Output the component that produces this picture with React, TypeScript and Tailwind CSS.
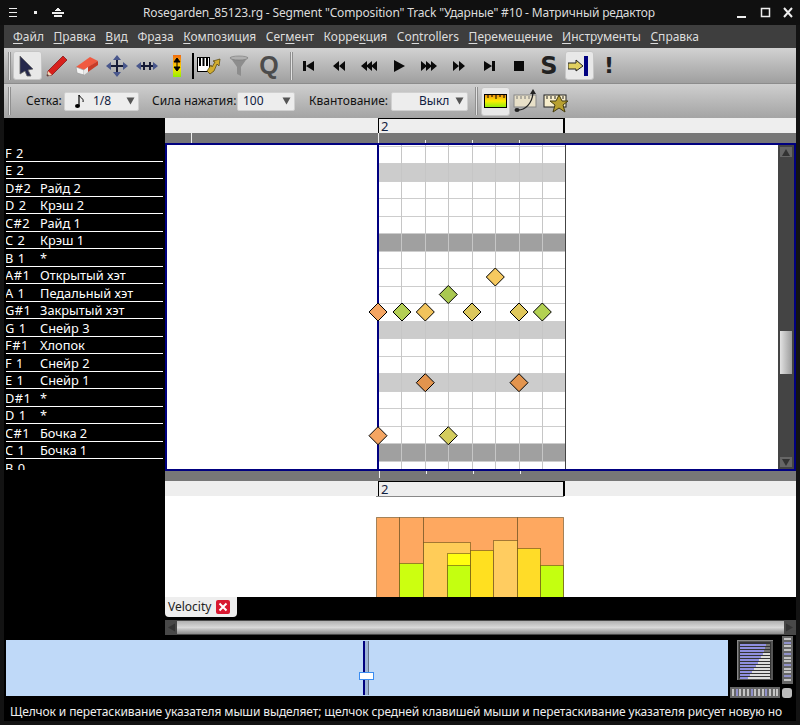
import type { ReactNode } from "react";

const FONT = "font-['Noto_Sans','Open_Sans',sans-serif]";

const menus: [string, string, string][] = [
  ["", "Ф", "айл"],
  ["", "П", "равка"],
  ["", "В", "ид"],
  ["Фр", "а", "за"],
  ["", "К", "омпозиция"],
  ["Сег", "м", "ент"],
  ["Корре", "к", "ция"],
  ["Co", "n", "trollers"],
  ["", "П", "еремещение"],
  ["", "И", "нструменты"],
  ["", "С", "правка"],
];

const keys: [string, string][] = [
  ["F 2", ""],
  ["E 2", ""],
  ["D#2", "Райд 2"],
  ["D 2", "Крэш 2"],
  ["C#2", "Райд 1"],
  ["C 2", "Крэш 1"],
  ["B 1", "*"],
  ["A#1", "Открытый хэт"],
  ["A 1", "Педальный хэт"],
  ["G#1", "Закрытый хэт"],
  ["G 1", "Снейр 3"],
  ["F#1", "Хлопок"],
  ["F 1", "Снейр 2"],
  ["E 1", "Снейр 1"],
  ["D#1", "*"],
  ["D 1", "*"],
  ["C#1", "Бочка 2"],
  ["C 1", "Бочка 1"],
  ["B 0", ""],
];

const columns = [401, 425, 448, 472, 495, 519, 542];
const rowEdges = Array.from({ length: 19 }, (_, k) => Math.round(145.5 + 17.5 * k));

const notes: [number, number, string][] = [
  [378, 312, "#f4a562"],
  [402, 312, "#b4cf55"],
  [425.3, 312, "#f2c45c"],
  [448.3, 294.5, "#a9c850"],
  [472, 312, "#dcc75c"],
  [495.3, 277, "#f6c95f"],
  [519, 312, "#dfc75c"],
  [542.3, 312, "#b3d152"],
  [425.3, 382.7, "#e2944e"],
  [519, 382.7, "#e2944e"],
  [378, 435.7, "#f4a562"],
  [448.3, 435.7, "#d3cc5e"],
];

const velocityBars: [number, number, number, string][] = [
  [376, 517, 23, "#fea860"],
  [399, 517, 24, "#fea860"],
  [423, 517, 94, "#fea860"],
  [517, 517, 46, "#fea860"],
  [399, 563, 24, "#ccff10"],
  [423, 542, 47, "#ffcc58"],
  [447, 553, 23, "#ffff10"],
  [447, 565, 23, "#c4ff10"],
  [470, 550, 23, "#ffe020"],
  [493, 540, 24, "#ffcc60"],
  [517, 548, 23, "#ffdc28"],
  [540, 565, 23, "#c4ff10"],
];

function Handle() {
  return <div className="h-[28px] w-[3px] shrink-0 border-x border-x-[#8f8f8f] bg-[#e2e2e2]" />;
}

function Tool({ active, className, children }: { active?: boolean; className: string; children: ReactNode }) {
  return (
    <div className={`flex h-[29px] shrink-0 items-center justify-center ${className}`}>
      <div
        className={`flex h-[29px] w-[29px] items-center justify-center rounded-[3px] border ${
          active ? "border-[#c6c6c6] bg-[#e8e8e8]" : "border-transparent"
        }`}
      >
        {children}
      </div>
    </div>
  );
}

function Combo({ className, children }: { className: string; children: ReactNode }) {
  return (
    <div className={`flex h-[19px] items-center rounded-[2px] border border-[#d0d0d0] bg-[#ededed] ${className}`}>
      {children}
      <svg width="9" height="8" viewBox="0 0 9 8" className="ml-auto mr-[3px]">
        <polygon points="0.5,0.5 8.5,0.5 4.5,7.5" fill="#555" />
      </svg>
    </div>
  );
}

function Transport({ d }: { d: string }) {
  return (
    <svg width="16" height="14" viewBox="0 0 16 14">
      <path d={d} fill="#0a0a0a" />
    </svg>
  );
}

function Ruler({ bottom }: { bottom?: boolean }) {
  return (
    <div className="relative h-[15px] bg-[#eeeeee]">
      <div className="absolute left-[213px] top-0 h-[15px] w-[187px] border-t border-l border-r-2 border-black" />
      {bottom && <div className="absolute left-[211px] top-[15px] h-px w-[188px] bg-[#888]" />}
      <span className="absolute left-[216px] top-0 text-[13px] leading-[17px] text-[#102040]">2</span>
    </div>
  );
}

function Ticks({ flip }: { flip?: boolean }) {
  const align = flip ? "items-start" : "items-end";
  return (
    <div className={`flex h-[10px] bg-[#777777] ${align}`}>
      {!flip && <div className="ml-[26px] mr-[186px] h-[10px] w-px bg-[#eee]" />}
      {flip && <div className="ml-[213px] w-px" />}
      <div className={`${flip ? "h-[7px]" : "h-[10px]"} w-px bg-[#eee]`} />
      <div className="ml-[46px] h-[3px] w-px bg-[#eee]" />
      <div className="ml-[46px] h-[3px] w-px bg-[#eee]" />
      <div className="ml-[46px] h-[3px] w-px bg-[#eee]" />
    </div>
  );
}

function Matrix() {
  return (
    <svg width="611" height="324" viewBox="167 145 611 324" className="block">
      <rect x="167" y="145" width="611" height="324" fill="#fff" />
      <g shapeRendering="crispEdges">
        {[1, 10, 13].map((k) => (
          <rect key={k} x="379" y={rowEdges[k]} width="186" height={rowEdges[k + 1] - rowEdges[k]} fill="#cccccc" />
        ))}
        {[5, 17].map((k) => (
          <rect key={k} x="379" y={rowEdges[k]} width="186" height={rowEdges[k + 1] - rowEdges[k]} fill="#a0a0a0" />
        ))}
        {rowEdges.map((y) => (
          <line key={y} x1="379" x2="565" y1={y + 0.5} y2={y + 0.5} stroke="#cdcdcd" />
        ))}
        {columns.map((x) => (
          <line key={x} x1={x + 0.5} x2={x + 0.5} y1="145" y2="469" stroke="#c6c6c6" />
        ))}
        <line x1="565.5" x2="565.5" y1="145" y2="469" stroke="#444" />
        <rect x="377" y="145" width="2" height="324" fill="#000080" />
      </g>
      {notes.map(([x, y, fill]) => (
        <polygon
          key={`${x}-${y}`}
          points={`${x},${y - 9} ${x + 9},${y} ${x},${y + 9} ${x - 9},${y}`}
          fill={fill}
          stroke="#000"
          strokeWidth="1"
        />
      ))}
    </svg>
  );
}

function Velocity() {
  return (
    <svg width="631" height="101" viewBox="165 496 631 101" className="block">
      <rect x="165" y="496" width="631" height="101" fill="#fff" />
      {velocityBars.map(([x, y, w, fill]) => (
        <rect
          key={`${x}-${y}`}
          x={x + 0.5}
          y={y + 0.5}
          width={w}
          height={110}
          fill={fill}
          stroke="#5a4010"
          strokeOpacity="0.55"
        />
      ))}
    </svg>
  );
}

function VScroll() {
  return (
    <div className="flex w-[16px] shrink-0 flex-col items-center bg-[#444444] pb-[2px] pt-[2px]">
      <div className="flex h-[10px] w-[12px] items-center justify-center bg-[#666]">
        <svg width="8" height="7" viewBox="0 0 8 7"><polygon points="4,0 8,7 0,7" fill="#333" /></svg>
      </div>
      <div className="mt-[174px] h-[43px] w-[12px] bg-gradient-to-r from-[#e2e2e2] to-[#9c9c9c]" />
      <div className="mt-[83px] flex h-[10px] w-[12px] items-center justify-center bg-[#666]">
        <svg width="8" height="7" viewBox="0 0 8 7"><polygon points="0,0 8,0 4,7" fill="#333" /></svg>
      </div>
    </div>
  );
}

function Dial() {
  const rows = [26, 25, 24, 23, 21, 19, 18, 16, 14, 12, 10, 8];
  return (
    <svg width="36" height="40" viewBox="0 0 36 40" className="block" shapeRendering="crispEdges">
      <rect width="36" height="40" fill="#555" stroke="#888" />
      <rect x="2" y="2" width="32" height="36" fill="#333" />
      {rows.map((w, i) => (
        <g key={i}>
          <rect x="3" y={4 + i * 3} width={w} height="2" fill="#8f8fe0" />
          <rect x={3 + w} y={4 + i * 3} width={30 - w} height="2" fill={i < 3 ? "#777" : "#ddd"} />
        </g>
      ))}
    </svg>
  );
}

function Wheel({ vertical }: { vertical?: boolean }) {
  const n = vertical ? 12 : 13;
  return (
    <svg
      width={vertical ? 11 : 50}
      height={vertical ? 48 : 11}
      viewBox={vertical ? "0 0 11 48" : "0 0 50 11"}
      className="block"
      shapeRendering="crispEdges"
    >
      <rect width="100%" height="100%" fill="#666" />
      {Array.from({ length: n }, (_, i) =>
        vertical ? (
          <rect key={i} x="2" y={2 + i * 3.7} width="7" height="2" fill={i % 3 === 1 ? "#8f90c8" : "#c4c4c4"} />
        ) : (
          <rect key={i} x={2 + i * 3.7} y="2" width="2" height="7" fill={i % 4 === 1 ? "#8f90c8" : "#c4c4c4"} />
        ),
      )}
    </svg>
  );
}

export default function App() {
  return (
    <div className={`flex h-[725px] w-[800px] flex-col overflow-hidden bg-[#131313] ${FONT}`}>
      {/* title bar */}
      <div className="flex h-[25px] shrink-0 items-center bg-[#101010] text-[#dcdcdc]">
        <svg width="70" height="14" viewBox="0 0 70 14" className="ml-[6px] shrink-0" shapeRendering="crispEdges">
          <rect x="3" y="2" width="8" height="1" fill="#eee" />
          <rect x="3" y="6" width="8" height="1" fill="#eee" />
          <rect x="3" y="10" width="8" height="1" fill="#eee" />
          <rect x="28" y="5" width="3" height="3" fill="#eee" />
          <polygon points="49,5 52,1 55,5" fill="#eee" />
          <rect x="46" y="6" width="12" height="2" fill="#eee" />
          <rect x="48" y="9" width="8" height="2" fill="#eee" />
        </svg>
        <div className="ml-[67px] w-[594px] whitespace-nowrap text-[12px] leading-[25px] tracking-[-0.15px]">
          Rosegarden_85123.rg - Segment "Composition" Track "Ударные" #10 - Матричный редактор
        </div>
        <svg width="60" height="14" viewBox="0 0 60 14" className="shrink-0">
          <rect x="0" y="10" width="9" height="2" fill="#eee" />
          <rect x="24.5" y="2.5" width="8" height="8" fill="none" stroke="#eee" strokeWidth="1.5" />
          <path d="M47 2 L55 11 M55 2 L47 11" stroke="#eee" strokeWidth="2" />
        </svg>
      </div>

      <div className="flex min-h-0 flex-1 flex-col px-[4px] pb-[4px]">
        {/* menu */}
        <div className="flex h-[23px] shrink-0 items-center gap-[9.5px] bg-[#3e3e3e] pl-[9px] text-[12px] text-[#dddddd]">
          {menus.map(([a, b, c]) => (
            <span key={a + b + c} className="whitespace-nowrap">
              {a}
              <span className="underline underline-offset-2">{b}</span>
              {c}
            </span>
          ))}
        </div>

        {/* main toolbar */}
        <div className="flex h-[35px] shrink-0 items-center bg-gradient-to-b from-[#d2d2d2] to-[#9f9f9f] pl-[4px]">
          <Handle />
          <div className="w-[1px]" />
          <Tool active className="w-[30px]">
            <svg width="18" height="22" viewBox="0 0 18 22">
              <polygon points="2,1 15,14 10,15 13,21 9,21 7,16 2,19" fill="#25284c" stroke="#666" strokeWidth="0.8" />
            </svg>
          </Tool>
          <Tool className="w-[30px]">
            <svg width="22" height="22" viewBox="0 0 22 22">
              <polygon points="1,21 2,16 17,1 21,5 6,20" fill="#d8201c" stroke="#7a1010" strokeWidth="0.7" />
              <polygon points="1,21 2,16 6,20" fill="#eed8b8" />
              <polygon points="1,21 1.5,19 3,20.5" fill="#222" />
            </svg>
          </Tool>
          <Tool className="w-[30px]">
            <svg width="24" height="22" viewBox="0 0 24 22">
              <polygon points="1,12 15,2 23,6 9,15" fill="#f05a40" />
              <polygon points="1,12 9,15 9,20 2,18" fill="#f4f4f4" stroke="#999" strokeWidth="0.7" />
              <polygon points="9,15 13,12 13,17 9,20" fill="#e8e8e8" />
              <polygon points="13,12 23,6 23,10 13,17" fill="#c83c28" />
            </svg>
          </Tool>
          <Tool className="w-[30px]">
            <svg width="22" height="22" viewBox="0 0 22 22">
              <path d="M11 3 V19 M3 11 H19" stroke="#151a36" strokeWidth="2" />
              <path d="M11 0 L15 5 H7 Z M11 22 L7 17 H15 Z M0 11 L5 7 V15 Z M22 11 L17 15 V7 Z" fill="#49578c" />
            </svg>
          </Tool>
          <Tool className="w-[30px]">
            <svg width="22" height="12" viewBox="0 0 22 12">
              <path d="M3 6 H19 M8 2 V10 M14 2 V10" stroke="#151a36" strokeWidth="2" />
              <path d="M0 6 L5 2 V10 Z M22 6 L17 10 V2 Z" fill="#49578c" />
            </svg>
          </Tool>
          <Tool className="w-[30px]">
            <svg width="8" height="22" viewBox="0 0 8 22">
              <defs>
                <linearGradient id="vel" x1="0" x2="0" y1="0" y2="1">
                  <stop offset="0" stopColor="#f06a10" />
                  <stop offset="0.6" stopColor="#ffe000" />
                  <stop offset="1" stopColor="#90f000" />
                </linearGradient>
              </defs>
              <rect width="8" height="22" fill="url(#vel)" />
              <path d="M4 4 V15 M4 3 L7 7 H1 Z M4 16 L1 12 H7 Z" fill="#000" stroke="#000" />
            </svg>
          </Tool>
          <div className="h-[26px] w-[2px] shrink-0 bg-black" />
          <Tool className="w-[30px]">
            <svg width="24" height="20" viewBox="0 0 24 20">
              <rect x="0.5" y="1.5" width="12" height="14" fill="#fff" stroke="#000" />
              <path d="M3 2 V10 M6.5 2 V10 M10 2 V10" stroke="#000" strokeWidth="2" />
              <path d="M0 11 V15" stroke="#000" />
              <polygon points="10,15 14,9 15,11 18,6 16,5 23,3 22,10 20,8 17,15 13,18" fill="#d2ad2e" stroke="#50400a" strokeWidth="0.7" />
            </svg>
          </Tool>
          <Tool className="w-[30px]">
            <svg width="20" height="22" viewBox="0 0 20 22">
              <polygon points="1,2 19,2 12,12 12,21 8,19 8,12" fill="#8d8d8d" />
              <ellipse cx="10" cy="3" rx="9" ry="2" fill="#b0b0b0" stroke="#777" strokeWidth="0.6" />
            </svg>
          </Tool>
          <Tool className="w-[30px]">
            <span className="font-['Liberation_Sans',sans-serif] text-[25px] font-bold leading-none text-[#4c4c4c]">Q</span>
          </Tool>
          <div className="w-[6px]" />
          <Handle />
          <div className="w-[1px]" />
          <Tool className="w-[30px]"><Transport d="M2 2 H5 V12 H2 Z M5 7 L13 2 V12 Z" /></Tool>
          <Tool className="w-[30px]"><Transport d="M8 7 L14 2 V12 Z M2 7 L8 2 V12 Z" /></Tool>
          <Tool className="w-[30px]"><Transport d="M0 7 L6 2 V12 Z M5 7 L11 2 V12 Z M10 7 L16 2 V12 Z" /></Tool>
          <Tool className="w-[30px]"><Transport d="M3 1 L14 7 L3 13 Z" /></Tool>
          <Tool className="w-[30px]"><Transport d="M16 7 L10 12 V2 Z M11 7 L5 12 V2 Z M6 7 L0 12 V2 Z" /></Tool>
          <Tool className="w-[30px]"><Transport d="M14 7 L8 12 V2 Z M8 7 L2 12 V2 Z" /></Tool>
          <Tool className="w-[30px]"><Transport d="M3 2 L11 7 L3 12 Z M11 2 H14 V12 H11 Z" /></Tool>
          <Tool className="w-[30px]"><Transport d="M3 2 H13 V12 H3 Z" /></Tool>
          <Tool className="w-[30px]">
            <span className="font-['DejaVu_Sans',sans-serif] text-[24px] font-bold leading-none text-[#222]">S</span>
          </Tool>
          <Tool active className="w-[30px]">
            <svg width="22" height="20" viewBox="0 0 22 20">
              <polygon points="0,7 8,7 8,4 15,10 8,15 8,13 0,13" fill="#e0cf60" stroke="#222" />
              <rect x="16" y="0" width="4" height="20" fill="#000080" />
            </svg>
          </Tool>
          <Tool className="w-[30px]">
            <span className="font-['DejaVu_Sans',sans-serif] text-[22px] font-bold leading-none text-[#222]">!</span>
          </Tool>
        </div>

        {/* second toolbar */}
        <div className="flex h-[35px] shrink-0 items-center border-t border-t-[#8c8c8c] bg-gradient-to-b from-[#cfcfcf] to-[#a4a4a4] pl-[4px] text-[12px] text-[#111]">
          <Handle />
          <span className="ml-[15px] w-[38px] whitespace-nowrap">Сетка:</span>
          <Combo className="w-[75px]">
            <svg width="10" height="15" viewBox="0 0 10 15" className="ml-[10px]">
              <path d="M4 1 V12" stroke="#000" strokeWidth="1.2" />
              <path d="M4 1 C5 4 9 4 8 8" stroke="#000" fill="none" />
              <ellipse cx="2.5" cy="12" rx="2.5" ry="2" fill="#000" />
            </svg>
            <span className="ml-[8px] text-[#102040]">1/8</span>
          </Combo>
          <span className="ml-[13px] w-[85px] whitespace-nowrap">Сила нажатия:</span>
          <Combo className="w-[58px]">
            <span className="ml-[5px] text-[#102040]">100</span>
          </Combo>
          <span className="ml-[14px] w-[82px] whitespace-nowrap">Квантование:</span>
          <Combo className="w-[77px]">
            <span className="ml-[27px] text-[#102040]">Выкл</span>
          </Combo>
          <div className="ml-[7px]"><Handle /></div>
          <Tool active className="ml-[2px] w-[30px]">
            <svg width="23" height="14" viewBox="0 0 23 14">
              <defs>
                <linearGradient id="bar" x1="0" x2="0" y1="0" y2="1">
                  <stop offset="0" stopColor="#f08a10" />
                  <stop offset="0.5" stopColor="#ffee00" />
                  <stop offset="1" stopColor="#88ee10" />
                </linearGradient>
              </defs>
              <rect x="0.5" y="0.5" width="22" height="13" fill="url(#bar)" stroke="#000" />
              <path d="M4 1 V4 M8 1 V3 M12 1 V5 M16 1 V3 M20 1 V4" stroke="#000" />
            </svg>
          </Tool>
          <svg width="24" height="24" viewBox="0 0 24 24" className="ml-[3px] shrink-0">
            <rect x="1" y="6" width="22" height="12" fill="#e8e0c8" stroke="#888" />
            <path d="M4 7 V10 M8 7 V10 M12 7 V10 M16 7 V10" stroke="#777" />
            <path d="M5 21 C12 21 19 15 20 4" stroke="#222" fill="none" strokeWidth="1.3" />
            <polygon points="20,0 23,5 17,5" fill="#222" />
            <ellipse cx="4" cy="21" rx="2.5" ry="2" fill="#222" />
          </svg>
          <svg width="26" height="24" viewBox="0 0 26 24" className="ml-[6px] shrink-0">
            <rect x="1" y="6" width="22" height="12" fill="#f8eecc" stroke="#222" />
            <path d="M4 7 V10 M8 7 V10 M12 7 V10 M16 7 V10 M20 7 V10" stroke="#222" />
            <polygon points="16,6 19,12 25,12 20,16 22,23 16,19 10,23 12,16 7,12 13,12" fill="#b8a030" stroke="#443c10" />
          </svg>
        </div>

        {/* editor */}
        <div className="flex shrink-0 bg-black">
          <div className="w-[161px] shrink-0 pl-[2px] pr-[2px]">
            <div className="h-[352px] overflow-hidden pt-[26px]">
              {keys.map(([note, name]) => (
                <div key={note} className="flex h-[17.5px] items-center border-b border-b-white pt-[2px] text-[12.8px] leading-none text-white">
                  <span className="ml-[-1px] w-[35px] shrink-0 whitespace-nowrap tracking-[0.5px]">{note}</span>
                  <span className="whitespace-nowrap">{name}</span>
                </div>
              ))}
            </div>
          </div>
          <div className="w-[631px] shrink-0">
            <Ruler />
            <Ticks />
            <div className="flex border-2 border-[#000080]">
              <Matrix />
              <VScroll />
            </div>
            <Ticks flip />
            <Ruler bottom />
            <Velocity />
          </div>
        </div>

        {/* controller tabs */}
        <div className="flex h-[43px] shrink-0 flex-col bg-black pl-[161px]">
          <div className="flex h-[20px] w-[72px] items-center rounded-b-[4px] bg-[#eeeeee] pl-[3px] text-[12px] text-[#222]">
            Velocity
            <span className="ml-[5px] flex h-[14px] w-[14px] items-center justify-center rounded-[2px] bg-[#d81830]">
              <svg width="10" height="10" viewBox="0 0 10 10">
                <path d="M1.5 1.5 L8.5 8.5 M8.5 1.5 L1.5 8.5" stroke="#fff" strokeWidth="2" />
              </svg>
            </span>
          </div>
          <div className="mt-[3px] flex h-[15px] items-center bg-[#484848] px-[1px]">
            <svg width="11" height="9" viewBox="0 0 11 9" className="shrink-0">
              <polygon points="2,4.5 9,0.5 9,8.5" fill="#333" />
            </svg>
            <div className="h-[13px] flex-1 bg-gradient-to-b from-[#b0b0b0] via-[#d8d8d8] to-[#8a8a8a]" />
            <svg width="11" height="9" viewBox="0 0 11 9" className="shrink-0">
              <polygon points="9,4.5 2,0.5 2,8.5" fill="#333" />
            </svg>
          </div>
          <div />
        </div>

        {/* panner */}
        <div className="flex h-[59px] shrink-0 bg-black pl-[2px]">
          <div className="relative h-[56px] w-[722px] shrink-0 bg-[#bfd9f8]">
            <div className="absolute left-[357px] top-px h-[54px] w-[5px] bg-[#9db4d4]" />
            <div className="absolute left-[357px] top-px h-[54px] w-[2px] bg-[#000080]" />
            <div className="absolute left-[362px] top-px h-[54px] w-px bg-[#667488]" />
            <div className="absolute left-[353px] top-[32px] h-[8px] w-[15px] border border-[#3a8cf0] bg-white" />
          </div>
          <div className="ml-[9px] w-[36px] shrink-0">
            <Dial />
            <div className="ml-[-7px] mt-[7px]"><Wheel /></div>
          </div>
          <div className="ml-[9px] mt-[-4px] w-[11px] shrink-0">
            <Wheel vertical />
            <div className="mt-[4px] h-[10px] w-[10px] rounded-[3px] bg-[#bbbbbb]" />
          </div>
        </div>

        {/* status */}
        <div className="h-[22px] shrink-0 overflow-hidden whitespace-nowrap bg-black pl-[6px] text-[12px] leading-[26px] tracking-[-0.12px] text-[#eeeeee]">
          Щелчок и перетаскивание указателя мыши выделяет; щелчок средней клавишей мыши и перетаскивание указателя рисует новую но
        </div>
      </div>
    </div>
  );
}
